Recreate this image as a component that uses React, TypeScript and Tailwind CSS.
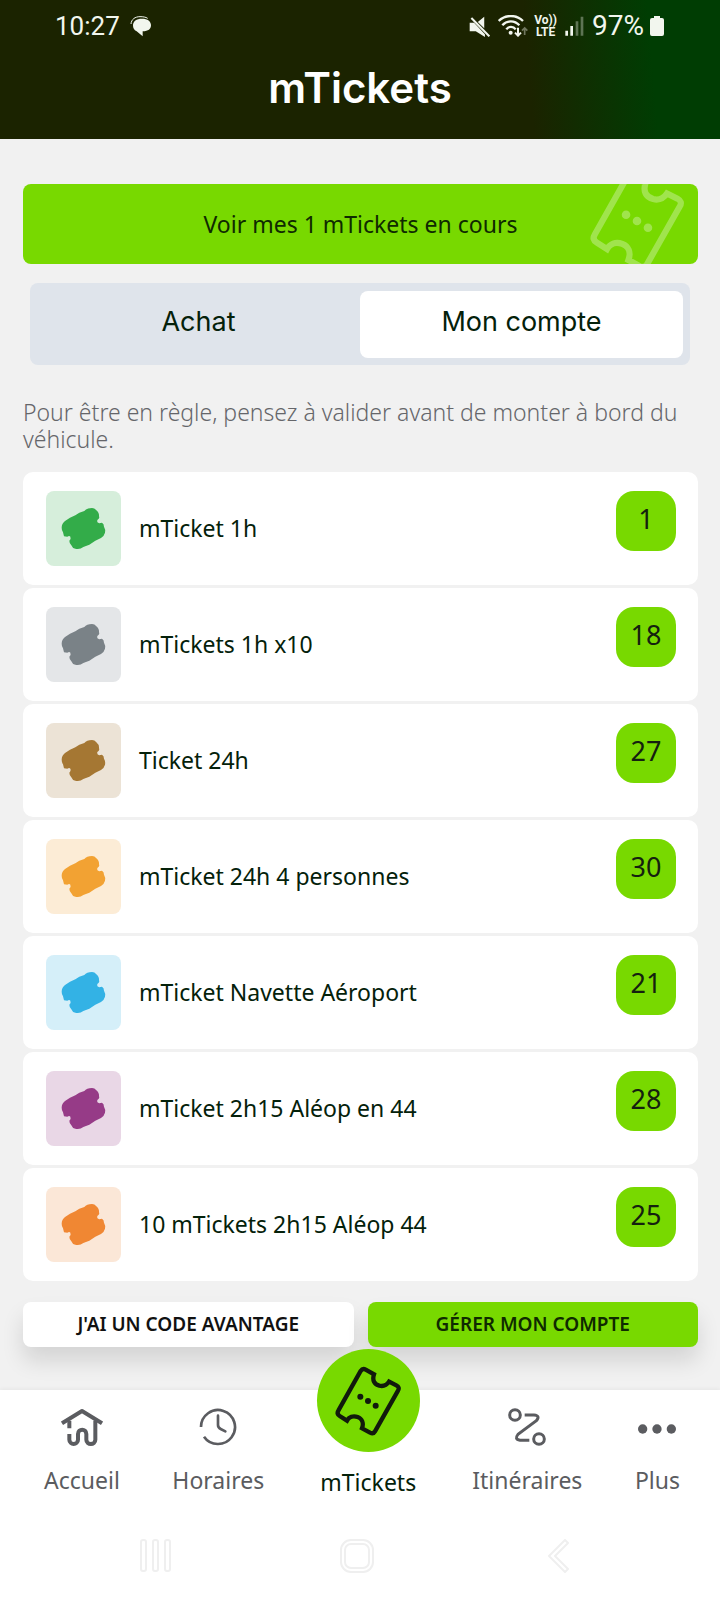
import React from "react";

const tickets = [
  { name: "mTicket 1h", count: 1, tile: "bg-[#d6eedb]", ink: "text-[#33ac49]" },
  { name: "mTickets 1h x10", count: 18, tile: "bg-[#e4e6e8]", ink: "text-[#7a8287]" },
  { name: "Ticket 24h", count: 27, tile: "bg-[#ece3d6]", ink: "text-[#a57733]" },
  { name: "mTicket 24h 4 personnes", count: 30, tile: "bg-[#fcecd6]", ink: "text-[#f2a233]" },
  { name: "mTicket Navette Aéroport", count: 21, tile: "bg-[#d5eff9]", ink: "text-[#33b2e5]" },
  { name: "mTicket 2h15 Aléop en 44", count: 28, tile: "bg-[#e9d7e6]", ink: "text-[#963b87]" },
  { name: "10 mTickets 2h15 Aléop 44", count: 25, tile: "bg-[#fbe7d7]", ink: "text-[#f08733]" },
];

function TicketOutline({ className }: { className: string }) {
  return (
    <svg viewBox="102 106 210 210" className={className} aria-hidden="true">
      <path
        d="M200 117 L225 131 C219 149 226 161 241 165 C254 168 264 162 270 153 L292 164 Q303 170 297 180 L228 302 Q223 311 213 306 L189 293 C195 277 189 264 176 259 C162 254 150 259 144 270 L122 256 Q112 250 118 240 L185 121 Q191 112 200 117 Z"
        fill="none"
        stroke="currentColor"
        strokeWidth="13"
      />
      <circle cx="184" cy="198" r="9" fill="currentColor" />
      <circle cx="207" cy="211" r="9" fill="currentColor" />
      <circle cx="230" cy="225" r="9" fill="currentColor" />
    </svg>
  );
}

function TicketSolid({ className }: { className: string }) {
  return (
    <svg viewBox="0 0 225 225" className={className} aria-hidden="true">
      <path
        d="M47 110 Q47 98 57 90 L72 80 L88 73 L100 65 L115 60 Q122 51 138 51 Q146 51 151 58 Q160 65 159 76 Q162 82 154 87 Q152 95 160 97 L168 95 Q174 98 174 107 Q179 115 177 125 Q175 134 165 141 L148 149 L130 161 L112 168 Q102 176 88 173 Q79 172 76 163 Q70 158 70 149 Q76 143 73 137 Q70 133 64 137 L54 136 L51 124 Q47 118 47 110 Z"
        fill="currentColor"
      />
    </svg>
  );
}

function StatusBar() {
  return (
    <div className="flex h-[52px] items-center justify-between pl-[55px] pr-[54px] font-['Roboto',sans-serif] text-[26px] leading-8 text-[#f2f6ee]">
      <div className="flex items-center gap-2.5">
        <span>10:27</span>
        <svg viewBox="0 0 66 66" className="size-[22px]" aria-hidden="true">
          <path d="M36 11c17 0 27 8 27 20 0 11-8 18-25 18v15L20 49C12 45 9 39 9 31c0-12 10-20 27-20Z" fill="currentColor" />
          <path d="M3 27C4 13 15 5 30 5c9 0 17 1 23 5" fill="none" stroke="currentColor" strokeWidth="3" />
        </svg>
      </div>
      <div className="flex items-center">
        <svg viewBox="0 0 62 62" className="mr-2 size-[21px]" aria-hidden="true">
          <path d="M26 18 45 2v34ZM2 20h13l32 34v8L20 45H2Z" fill="currentColor" />
          <path d="M7 6 60 60" stroke="currentColor" strokeWidth="6" />
        </svg>
        <svg viewBox="0 0 90 66" className="mr-1.5 h-[22px] w-[30px]" aria-hidden="true">
          <g fill="none" stroke="currentColor" strokeWidth="7">
            <path d="M2 18C22-2 55-2 75 18" />
            <path d="M13 31C27 15 50 15 64 31" />
            <path d="M25 43C32 33 46 33 53 43" />
          </g>
          <circle cx="38" cy="53" r="6" fill="currentColor" />
          <path d="M60 38v24M51 53l9 9 9-9" fill="none" stroke="currentColor" strokeWidth="6" />
          <path d="M80 60V40M72 47l8-8 8 8" fill="none" stroke="currentColor" strokeWidth="5" opacity="0.4" />
        </svg>
        <div className="mr-2 flex flex-col items-center text-[12px] font-bold leading-3">
          <span>Vo))</span>
          <span>LTE</span>
        </div>
        <svg viewBox="0 0 57 60" className="mr-2 h-5 w-[19px]" aria-hidden="true">
          <path d="M5 59V44M20 59V30" stroke="currentColor" strokeWidth="8" />
          <path d="M36 59V16M51 59V2" stroke="currentColor" strokeWidth="8" opacity="0.35" />
        </svg>
        <span className="text-[28px]">97%</span>
        <svg viewBox="0 0 14 20" className="ml-1.5 mr-0.5 h-5 w-3.5" aria-hidden="true">
          <path d="M4 0h6v2h2q2 0 2 2v14q0 2-2 2H2q-2 0-2-2V4q0-2 2-2h2Z" fill="currentColor" />
        </svg>
      </div>
    </div>
  );
}

function HomeIcon() {
  return (
    <svg viewBox="0 0 126 114" className="h-[38px] w-[42px]" fill="none" stroke="currentColor" strokeWidth="12" aria-hidden="true">
      <path d="M3 46 63 9l60 37" strokeLinejoin="round" />
      <path d="M25 38v23M25 78v17c0 17 26 17 26 0V78c0-17 25-17 25 0v17c0 17 27 17 27 0V38" />
    </svg>
  );
}

function ClockIcon() {
  return (
    <svg viewBox="0 0 114 114" className="size-[38px]" fill="none" stroke="currentColor" strokeWidth="8" aria-hidden="true">
      <path d="M6 57A51 51 0 1 1 15 86" />
      <path d="M57 23v28q0 8 8 12l14 7" strokeLinecap="round" />
    </svg>
  );
}

function RouteIcon() {
  return (
    <svg viewBox="0 0 114 114" className="size-[38px]" fill="none" stroke="currentColor" strokeWidth="9" aria-hidden="true">
      <circle cx="21" cy="21" r="16" />
      <circle cx="93" cy="93" r="16" />
      <path d="M50 21h28q20 2 7 17L30 79q-12 15 6 18h28" />
    </svg>
  );
}

function MoreIcon() {
  return (
    <svg viewBox="0 0 114 114" className="size-[38px]" fill="currentColor" aria-hidden="true">
      <circle cx="14" cy="63" r="14" />
      <circle cx="57" cy="63" r="14" />
      <circle cx="100" cy="63" r="14" />
    </svg>
  );
}

function NavItem({ label, icon }: { label: string; icon: React.ReactNode }) {
  return (
    <a href="#" className="flex flex-col items-center gap-[18px] text-[#5b5c60]">
      {icon}
      <span className="leading-8">{label}</span>
    </a>
  );
}

export default function App() {
  return (
    <div className="flex min-h-screen flex-col bg-[#f1f1f1] font-['Noto_Sans',sans-serif] text-[23px] text-[#04210a]">
      <header className="bg-[linear-gradient(85deg,#1b2300_73%,#003d03_90%)] pb-[22px]">
        <StatusBar />
        <h1 className="pt-2.5 pb-1 text-center font-['Inter',sans-serif] text-[42px] font-semibold leading-[51px] text-white">mTickets</h1>
      </header>

      <main className="flex flex-col pl-[23px] pr-[22px] pt-[45px]">
        <button type="button" className="relative h-20 overflow-hidden rounded-lg bg-[#78d900] text-[#0f2a00]">
          Voir mes 1 mTickets en cours
          <TicketOutline className="absolute -top-[13px] right-[11px] size-[100px] text-white/30" />
        </button>

        <div role="tablist" className="ml-[7px] mr-2 mt-[19px] grid grid-cols-2 rounded-lg bg-[#dfe4eb] px-[7px] pb-[7px] pt-2 font-['Inter',sans-serif] text-[27px]">
          <button type="button" role="tab" aria-selected="false" className="h-[67px] pb-1">Achat</button>
          <button type="button" role="tab" aria-selected="true" className="h-[67px] rounded-lg bg-white pb-1">Mon compte</button>
        </div>

        <p className="mt-[34px] font-light leading-[27px] text-[#65666a]">
          Pour être en règle, pensez à valider avant de monter à bord du véhicule.
        </p>

        <ul className="mt-[19px] flex flex-col gap-[3px]">
          {tickets.map((t) => (
            <li key={t.name} className="flex items-start gap-[18px] rounded-[10px] bg-white py-[19px] pl-[23px] pr-[22px]">
              <div className={`size-[75px] rounded-lg ${t.tile}`}>
                <TicketSolid className={`size-full ${t.ink}`} />
              </div>
              <span className="flex-1 self-center">{t.name}</span>
              <span className="flex size-[60px] items-center justify-center rounded-[18px] bg-[#78d900] pb-1 text-[27px] text-[#14210f]">{t.count}</span>
            </li>
          ))}
        </ul>

        <div className="mt-[21px] grid grid-cols-2 gap-3.5 pb-[43px] text-[19px] font-semibold text-[#111]">
          <button type="button" className="h-[45px] rounded-lg bg-white shadow-[0_14px_22px_rgba(0,0,0,0.12)]">J'AI UN CODE AVANTAGE</button>
          <button type="button" className="h-[45px] rounded-lg bg-[#78d900] text-[#0f2a00] shadow-[0_14px_22px_rgba(0,0,0,0.12)]">GÉRER MON COMPTE</button>
        </div>
      </main>

      <nav className="relative flex items-start justify-between bg-white pl-11 pr-10 pt-[18px] shadow-[0_-1px_4px_rgba(0,0,0,0.05)]">
        <NavItem label="Accueil" icon={<HomeIcon />} />
        <NavItem label="Horaires" icon={<ClockIcon />} />
        <a href="#" className="-mt-[59px] flex flex-col items-center gap-[14px]">
          <span className="flex size-[103px] items-center justify-center rounded-full bg-[#78d900] text-[#111a0c]">
            <TicketOutline className="size-[70px]" />
          </span>
          <span className="leading-8">mTickets</span>
        </a>
        <NavItem label="Itinéraires" icon={<RouteIcon />} />
        <NavItem label="Plus" icon={<MoreIcon />} />
      </nav>

      <footer className="relative flex flex-1 items-center justify-between bg-white pl-[138px] pr-36 pt-[14px] text-[#efefef]">
        <svg viewBox="0 0 35 34" className="h-[34px] w-[35px]" fill="none" stroke="currentColor" strokeWidth="2" aria-hidden="true">
          <rect x="3" y="1" width="5" height="31" rx="2" />
          <rect x="15" y="1" width="5" height="31" rx="2" />
          <rect x="27" y="1" width="5" height="31" rx="2" />
        </svg>
        <svg viewBox="0 0 34 34" className="size-[34px]" fill="none" stroke="currentColor" strokeWidth="2" aria-hidden="true">
          <rect x="1" y="1" width="32" height="32" rx="10" />
          <rect x="5" y="5" width="24" height="24" rx="6" />
        </svg>
        <svg viewBox="0 0 35 34" className="h-[34px] w-[35px]" fill="none" stroke="currentColor" strokeWidth="2" strokeLinejoin="round" aria-hidden="true">
          <path d="M24 1 8 17l16 16 3-3-13-13L27 4Z" />
        </svg>
      </footer>
    </div>
  );
}
